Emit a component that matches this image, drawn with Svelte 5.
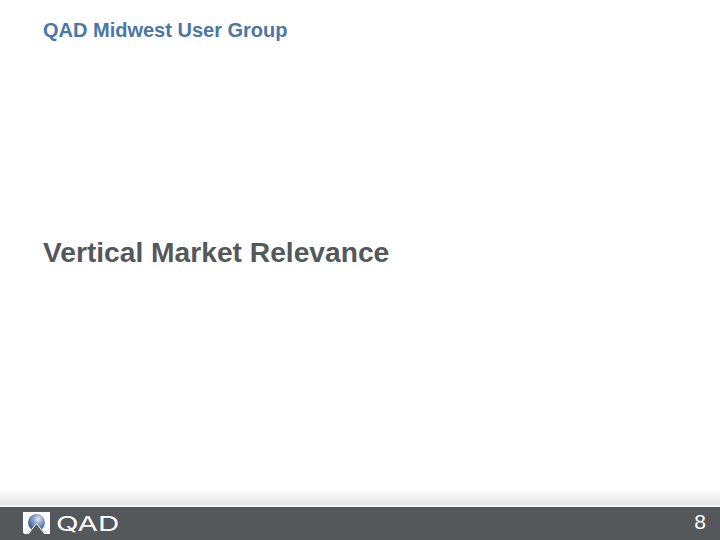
<script>
    const brand = 'QAD Midwest User Group';
    const heading = 'Vertical Market Relevance';
    const pageNumber = 8;
</script>

<main class="slide">
    <header class="brand">{brand}</header>
    <section class="content">
        <h1>{heading}</h1>
    </section>
    <div class="fade"></div>
    <footer class="bar">
        <div class="logo">
            <svg width="27" height="23" viewBox="0 0 27 23">
                <defs>
                    <radialGradient id="globe" cx="0.6" cy="0.3" r="0.75">
                        <stop offset="0" stop-color="#e6ecf4" />
                        <stop offset="0.4" stop-color="#86a0ca" />
                        <stop offset="1" stop-color="#2f4a78" />
                    </radialGradient>
                </defs>
                <path d="M0 0H27V22H22.5L13.5 11 4.5 22H1.5L0 20.5Z" fill="#fff" />
                <circle cx="13.5" cy="10.5" r="8.5" fill="url(#globe)" />
                <path d="M4.5 23 13.5 11.5 22.5 23Z" fill="#54585b" stroke="#fff" stroke-width="1" />
                <path d="M3 23H24" stroke="#54585b" stroke-width="2" />
            </svg>
            <span class="wordmark">QAD</span>
        </div>
        <span class="page">{pageNumber}</span>
    </footer>
</main>

<style>
    :global(body) {
        margin: 0;
        background: #fff;
    }

    .slide {
        width: 720px;
        height: 540px;
        display: flex;
        flex-direction: column;
        font-family: "Liberation Sans", Arial, sans-serif;
        overflow: hidden;
    }

    .brand {
        padding: 19px 0 0 43px;
        height: 23px;
        font-size: 20px;
        line-height: 23px;
        font-weight: bold;
        color: #4a77a6;
    }

    .content {
        flex: 1;
        padding: 194px 0 0 43px;
    }

    h1 {
        margin: 0;
        font-size: 28.2px;
        line-height: 33px;
        font-weight: bold;
        color: #54585b;
    }

    .fade {
        height: 17px;
        background: linear-gradient(#ffffff, #e4e4e4);
    }

    .bar {
        height: 33px;
        border-top: 2px solid #f4f4f4;
        background: #54585b;
        display: flex;
        align-items: center;
        justify-content: space-between;
        padding: 0 14px 0 23px;
    }

    .logo {
        display: flex;
        align-items: center;
        gap: 6px;
    }

    .wordmark {
        font-family: Inter, "Liberation Sans", sans-serif;
        font-weight: 400;
        font-size: 20px;
        line-height: 24px;
        color: #fff;
        transform: scaleX(1.48);
        transform-origin: left center;
    }

    .page {
        font-size: 21px;
        line-height: 24px;
        margin-bottom: 3px;
        color: #fff;
    }
</style>
